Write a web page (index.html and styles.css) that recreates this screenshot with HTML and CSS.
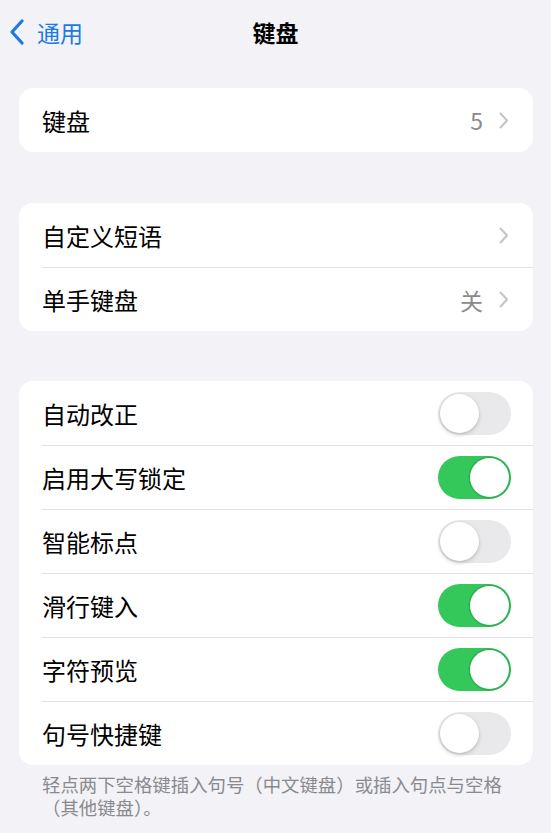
FILE: index.html
```html
<!DOCTYPE html>
<html lang="zh-CN">
<head>
    <meta charset="UTF-8">
    <meta name="viewport" content="width=device-width, initial-scale=1.0">
    <title>键盘</title>
    <link rel="stylesheet" href="styles.css">
</head>
<body>

    <header class="nav-bar">
        <a class="back" href="#">
            <svg class="back-icon" width="16" height="26" viewBox="0 0 16 26">
                <path d="M13 2 L3 13 L13 24" fill="none" stroke="#1b7be6" stroke-width="3.2" stroke-linecap="round" stroke-linejoin="round"/>
            </svg>
            <span>通用</span>
        </a>
        <h1 class="title">键盘</h1>
        <span></span>
    </header>

    <div class="group">
        <div class="row">
            <span class="label">键盘</span>
            <span class="value">5</span>
            <svg class="chevron" width="10" height="17" viewBox="0 0 10 17">
                <path d="M1.5 1.5 L8 8.5 L1.5 15.5" fill="none" stroke="#c4c4c7" stroke-width="2" stroke-linecap="round" stroke-linejoin="round"/>
            </svg>
        </div>
    </div>

    <div class="group">
        <div class="row">
            <span class="label">自定义短语</span>
            <svg class="chevron" width="10" height="17" viewBox="0 0 10 17">
                <path d="M1.5 1.5 L8 8.5 L1.5 15.5" fill="none" stroke="#c4c4c7" stroke-width="2" stroke-linecap="round" stroke-linejoin="round"/>
            </svg>
        </div>
        <div class="row">
            <span class="label">单手键盘</span>
            <span class="value">关</span>
            <svg class="chevron" width="10" height="17" viewBox="0 0 10 17">
                <path d="M1.5 1.5 L8 8.5 L1.5 15.5" fill="none" stroke="#c4c4c7" stroke-width="2" stroke-linecap="round" stroke-linejoin="round"/>
            </svg>
        </div>
    </div>

    <div class="group">
        <div class="row">
            <span class="label">自动改正</span>
            <span class="switch"></span>
        </div>
        <div class="row">
            <span class="label">启用大写锁定</span>
            <span class="switch on"></span>
        </div>
        <div class="row">
            <span class="label">智能标点</span>
            <span class="switch"></span>
        </div>
        <div class="row">
            <span class="label">滑行键入</span>
            <span class="switch on"></span>
        </div>
        <div class="row">
            <span class="label">字符预览</span>
            <span class="switch on"></span>
        </div>
        <div class="row">
            <span class="label">句号快捷键</span>
            <span class="switch"></span>
        </div>
    </div>

    <p class="footer">轻点两下空格键插入句号（中文键盘）或插入句点与空格（其他键盘）。</p>

</body>
</html>
```

FILE: styles.css
```css
body {
    font-family: "Noto Sans CJK SC", "Noto Sans", sans-serif;
    background-color: #f2f2f7;
    color: #000;
    margin: 0;
}

.nav-bar {
    display: grid;
    grid-template-columns: 1fr auto 1fr;
    align-items: center;
    height: 64px;
    margin-bottom: 24px;
}

.back {
    display: flex;
    align-items: center;
    gap: 12px;
    padding-left: 9px;
    color: #1b7be6;
    text-decoration: none;
    font-size: 23px;
}

.title {
    margin: 0;
    font-size: 23px;
    font-weight: 700;
}

.group {
    background-color: #fff;
    border-radius: 14px;
    margin: 0 18px 51px 19px;
    overflow: hidden;
}

.group:nth-of-type(2) {
    margin-bottom: 50px;
}

.row {
    display: flex;
    align-items: center;
    height: 64px;
    margin-left: 23px;
    padding-right: 22px;
    border-top: 1px solid #e3e3e6;
    box-sizing: border-box;
}

.row:first-child {
    border-top: none;
}

.label {
    flex: 1;
    font-size: 24px;
}

.value {
    color: #8a8a8e;
    font-size: 23px;
    margin-right: 16px;
}

.chevron {
    margin-right: 2px;
}

.switch {
    position: relative;
    width: 73px;
    height: 43px;
    border-radius: 22px;
    background-color: #e9e9eb;
}

.switch::after {
    content: "";
    position: absolute;
    top: 2px;
    left: 2px;
    width: 39px;
    height: 39px;
    border-radius: 50%;
    background-color: #fff;
    box-shadow: 0 2px 4px rgba(0, 0, 0, 0.18), 0 0 0 0.5px rgba(0, 0, 0, 0.06);
}

.switch.on {
    background-color: #34c759;
}

.switch.on::after {
    left: 32px;
    box-shadow: 0 0 0 1.5px #2fae50;
}

.group:last-of-type {
    margin-bottom: 0;
}

.footer {
    margin: 8px 24px 0 42px;
    color: #8a8a8e;
    font-size: 18.4px;
    line-height: 23px;
}
```
